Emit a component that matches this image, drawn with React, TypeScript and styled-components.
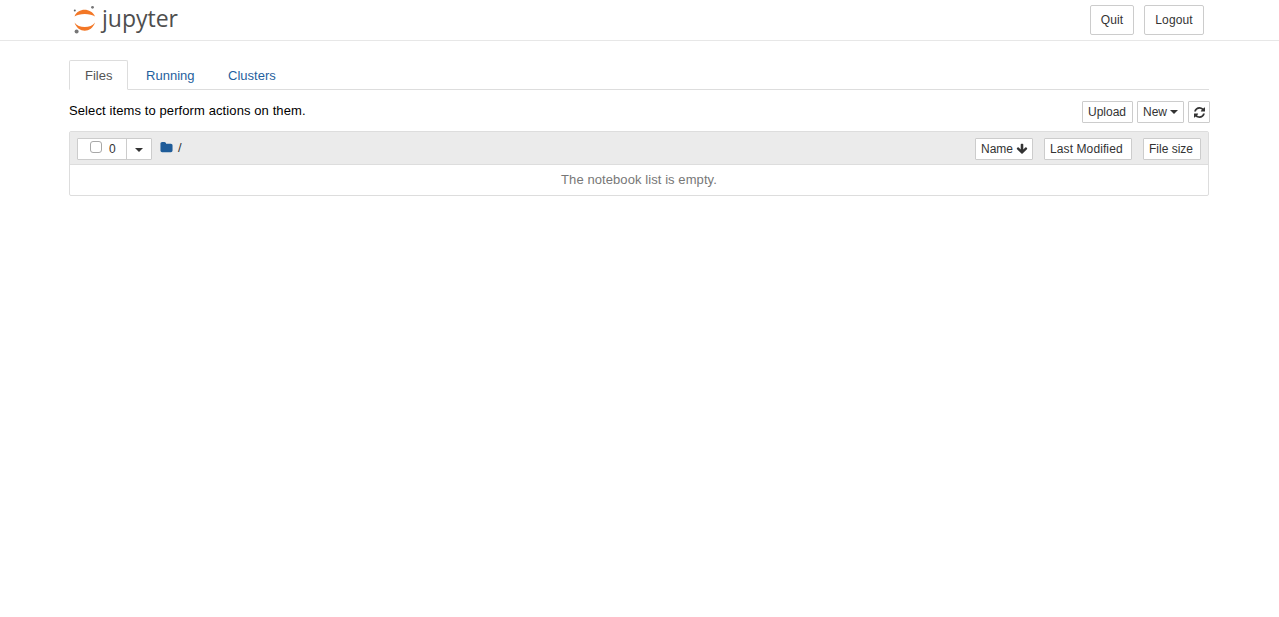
import React from "react";
import styled, { createGlobalStyle } from "styled-components";

const Global = createGlobalStyle`
  html, body { margin: 0; padding: 0; background: #fff; }
  body { font-family: "Liberation Sans", Arial, sans-serif; font-size: 13px; line-height: 18px; color: #000; }
  * { box-sizing: border-box; }
`;

const Header = styled.header`
  height: 41px;
  border-bottom: 1px solid #e7e7e7;
`;
const HeaderInner = styled.div`
  width: 1140px;
  margin-left: 69px;
  padding: 5px 5px 0 4px;
  display: flex;
  justify-content: space-between;
  align-items: flex-start;
`;
const Logo = styled.div`
  display: flex;
  align-items: flex-start;
  gap: 3px;
  height: 30px;
`;
const LogoWord = styled.span`
  font-family: "Open Sans", sans-serif;
  font-size: 23px;
  line-height: 27px;
  color: #4e4e4e;
`;
const HeaderActions = styled.div`
  display: flex;
  gap: 10px;
`;
const HeaderButton = styled.button<{ $w: number }>`
  width: ${(p) => p.$w}px;
  height: 30px;
  padding: 0;
  font: 12px/18px "Liberation Sans", Arial, sans-serif;
  letter-spacing: 0.1px;
  color: #333;
  background: #fff;
  border: 1px solid #ccc;
  border-radius: 2px;
`;
const Main = styled.main`
  width: 1140px;
  margin: 19px 0 0 69px;
`;
const Tabs = styled.nav`
  display: flex;
  gap: 1.6px;
  height: 30px;
  border-bottom: 1px solid #ddd;
`;
const Tab = styled.a<{ $active?: boolean }>`
  height: 30px;
  padding: 6px 15px;
  line-height: 18px;
  border: 1px solid ${(p) => (p.$active ? "#ddd" : "transparent")};
  border-bottom-color: ${(p) => (p.$active ? "#fff" : "transparent")};
  border-radius: 2px 2px 0 0;
  color: ${(p) => (p.$active ? "#555" : "#1f5f9e")};
  background: ${(p) => (p.$active ? "#fff" : "transparent")};
`;
const ToolRow = styled.div`
  display: flex;
  justify-content: space-between;
  align-items: flex-start;
  margin-top: 11px;
  margin-right: -1px;
`;
const Hint = styled.span`
  line-height: 20px;
  letter-spacing: 0.1px;
`;
const ToolButtons = styled.div`
  display: flex;
  gap: 4px;
`;
const SmallButton = styled.button<{ $w: number; $track?: number }>`
  width: ${(p) => p.$w}px;
  height: 22px;
  padding: 0 0 0 5px;
  display: inline-flex;
  align-items: center;
  gap: 3px;
  font: 12px/18px "Liberation Sans", Arial, sans-serif;
  letter-spacing: ${(p) => p.$track ?? 0}px;
  color: #333;
  background: #fff;
  border: 1px solid #ccc;
  border-radius: 1px;
`;
const Caret = styled.span`
  display: inline-block;
  width: 0;
  height: 0;
  border-top: 4px solid #333;
  border-left: 4px solid transparent;
  border-right: 4px solid transparent;
`;
const ListBox = styled.section`
  margin-top: 8px;
  height: 65px;
  border: 1px solid #ddd;
  border-radius: 2px;
  background: #fff;
`;
const ListHeader = styled.div`
  height: 33px;
  padding: 6px 7px 0 7px;
  display: flex;
  align-items: flex-start;
  background: #ebebeb;
  border-bottom: 1px solid #ddd;
`;
const SelectGroup = styled.div`
  width: 75px;
  height: 22px;
  display: flex;
  background: #fff;
  border: 1px solid #ccc;
  border-radius: 1px;
`;
const SelectMain = styled.div`
  width: 49px;
  display: flex;
  align-items: center;
  padding-left: 12px;
  gap: 7px;
  border-right: 1px solid #ccc;
  font-size: 12px;
  color: #333;
`;
const CheckBox = styled.input`
  appearance: none;
  width: 12px;
  height: 12px;
  margin: 0 0 4px;
  background: #fff;
  border: 1px solid #a8a8a8;
  border-radius: 3px;
`;
const SelectCaret = styled.div`
  flex: 1;
  display: flex;
  align-items: center;
  justify-content: center;
  padding-top: 2px;
`;
const Crumb = styled.div`
  display: flex;
  align-items: center;
  gap: 5px;
  margin-left: 8px;
  height: 18px;
  color: #333;
`;
const CrumbText = styled.span`
  margin-top: 2px;
`;
const Sorts = styled.div`
  margin-left: auto;
  display: flex;
  gap: 11px;
`;
const EmptyRow = styled.div`
  height: 30px;
  line-height: 29px;
  text-align: center;
  letter-spacing: 0.08px;
  color: #777;
`;

const Jupyter = () => (
  <svg width="26" height="30" viewBox="0 0 26 30">
    <path d="M1.5 11.5 C5 2.6 18 2.6 22 11.5 C18 8 5.5 8 1.5 11.5 Z" fill="#f37726" />
    <path d="M1.5 17.5 C5.5 23.6 18 23.6 22 17.5 C18.5 28.4 5 28.4 1.5 17.5 Z" fill="#f37726" />
    <circle cx="19.5" cy="2.3" r="1.4" fill="#767677" />
    <circle cx="1.8" cy="5.5" r="1" fill="#616262" />
    <circle cx="3.6" cy="26.6" r="2" fill="#767677" />
  </svg>
);
const FolderIcon = () => (
  <svg width="13" height="13" viewBox="0 0 1792 1792">
    <path fill="#1f5c99" d="M1728 608v704q0 92-66 158t-158 66h-1216q-92 0-158-66t-66-158v-960q0-92 66-158t158-66h320q92 0 158 66t66 158v32h672q92 0 158 66t66 158z" />
  </svg>
);
const ArrowDown = () => (
  <svg width="12" height="12" viewBox="0 0 1792 1792">
    <path fill="#333" d="M1675 832q0 53-37 90l-651 652q-39 37-91 37-53 0-90-37l-651-652q-38-36-38-90 0-53 38-91l74-75q39-37 91-37 53 0 90 37l294 294v-704q0-52 38-90t90-38h128q52 0 90 38t38 90v704l294-294q37-37 90-37 52 0 91 37l75 75q37 39 37 91z" />
  </svg>
);
const Refresh = () => (
  <svg width="11" height="11" viewBox="0 0 1536 1536">
    <path fill="#333" d="M1511 928q0 5-1 7-64 268-268 434.5t-478 166.5q-146 0-282.5-55t-243.5-157l-129 129q-19 19-45 19t-45-19-19-45v-448q0-26 19-45t45-19h448q26 0 45 19t19 45-19 45l-137 137q71 66 161 102t187 36q134 0 250-65t186-179q11-17 53-117 8-23 30-23h192q13 0 22.5 9.5t9.5 22.5zm25-800v448q0 26-19 45t-45 19h-448q-26 0-45-19t-19-45 19-45l138-138q-148-137-349-137-134 0-250 65t-186 179q-11 17-53 117-8 23-30 23h-199q-13 0-22.5-9.5t-9.5-22.5v-7q65-268 270-434.5t480-166.5q146 0 284 55.5t245 156.5l130-129q19-19 45-19t45 19 19 45z" />
  </svg>
);

export default function App() {
  return (
    <>
      <Global />
      <Header>
        <HeaderInner>
          <Logo>
            <Jupyter />
            <LogoWord>jupyter</LogoWord>
          </Logo>
          <HeaderActions>
            <HeaderButton $w={44}>Quit</HeaderButton>
            <HeaderButton $w={60}>Logout</HeaderButton>
          </HeaderActions>
        </HeaderInner>
      </Header>
      <Main>
        <Tabs>
          <Tab $active>Files</Tab>
          <Tab>Running</Tab>
          <Tab>Clusters</Tab>
        </Tabs>
        <ToolRow>
          <Hint>Select items to perform actions on them.</Hint>
          <ToolButtons>
            <SmallButton $w={51}>Upload</SmallButton>
            <SmallButton $w={47}>New <Caret /></SmallButton>
            <SmallButton $w={22}><Refresh /></SmallButton>
          </ToolButtons>
        </ToolRow>
        <ListBox>
          <ListHeader>
            <SelectGroup>
              <SelectMain>
                <CheckBox type="checkbox" />
                <span>0</span>
              </SelectMain>
              <SelectCaret><Caret /></SelectCaret>
            </SelectGroup>
            <Crumb>
              <FolderIcon />
              <CrumbText>/</CrumbText>
            </Crumb>
            <Sorts>
              <SmallButton $w={58}>Name <ArrowDown /></SmallButton>
              <SmallButton $w={88} $track={0.1}>Last Modified</SmallButton>
              <SmallButton $w={58}>File size</SmallButton>
            </Sorts>
          </ListHeader>
          <EmptyRow>The notebook list is empty.</EmptyRow>
        </ListBox>
      </Main>
    </>
  );
}
